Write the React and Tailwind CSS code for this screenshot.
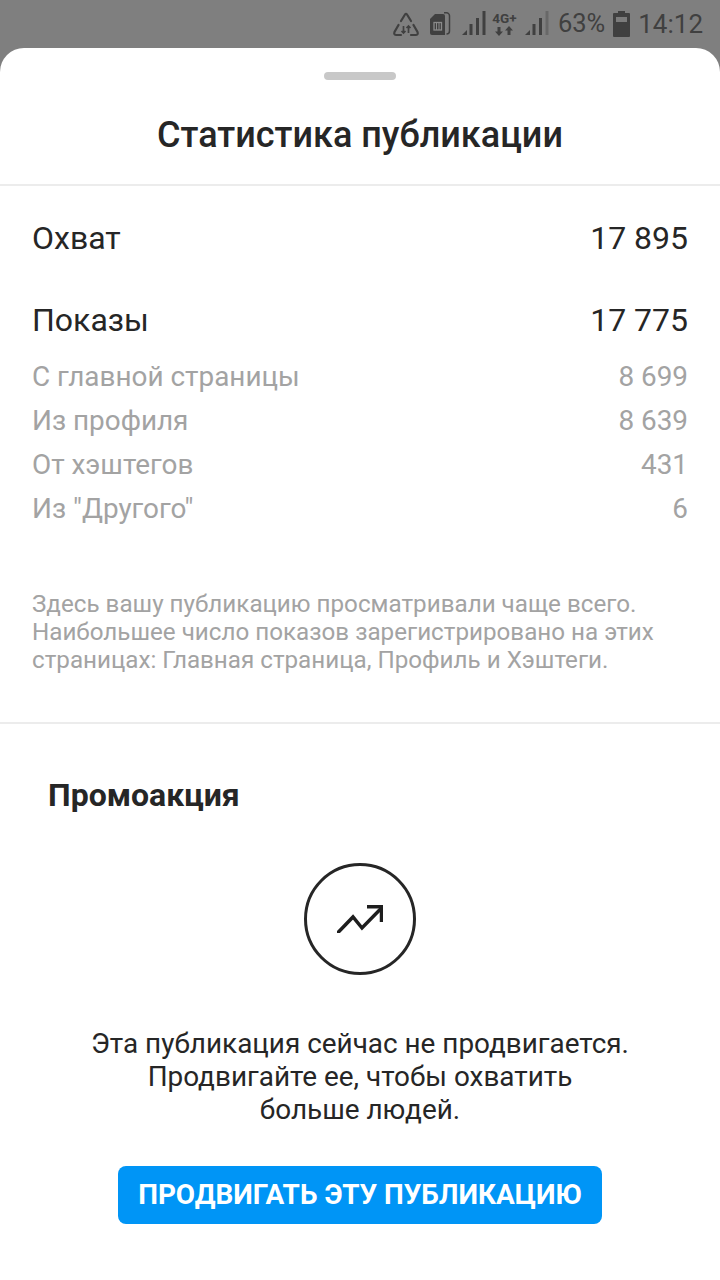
import React from "react";

const impressions = [
  ["С главной страницы", "8 699"],
  ["Из профиля", "8 639"],
  ["От хэштегов", "431"],
  ['Из "Другого"', "6"],
];

function SignalBars({ faded, className }) {
  return (
    <svg width="24" height="26" viewBox="0 0 24 26" className={className} fill="currentColor">
      <path d="M0 24l5-5v5z" />
      <rect x="7.5" y="13" width="3" height="11" />
      <rect x="14" y="7" width="3" height="17" />
      <rect x="20.5" y="0" width="3" height="24" opacity={faded ? 0.35 : 1} />
    </svg>
  );
}

function StatusBar() {
  return (
    <div className="h-12 flex items-center justify-end pr-[17px] text-[#404040]">
      {/* data saver */}
      <svg width="26" height="26" viewBox="0 0 26 26" fill="none" stroke="currentColor" strokeWidth="2.2" strokeLinecap="round" className="mr-[10px]">
        <path d="M8 10 L12 3.5 Q13 2 14 3.5 L18 10" />
        <path d="M5.5 14 L1.5 21 Q0.5 24 3.5 24 H8" />
        <path d="M20.5 14 L24.5 21 Q25.5 24 22.5 24 H18" />
        <path d="M10.5 15v7M8.5 20l2 2 2-2M15.5 22v-7M13.5 17l2-2 2 2" strokeWidth="1.7" strokeLinecap="butt" />
      </svg>
      {/* SIM */}
      <svg width="22" height="24" viewBox="0 0 22 24" className="mr-[11px]">
        <path d="M1 7 L6 2 H14 a2 2 0 0 1 2 2 V23 H3 a2 2 0 0 1 -2 -2z" fill="currentColor" />
        <path d="M15 0.8 H17.5 a3 3 0 0 1 3 3 V19 a3 3 0 0 1 -3 3" fill="none" stroke="currentColor" strokeWidth="1.5" />
        <rect x="5" y="10.5" width="7.5" height="7.5" fill="none" stroke="#8a8a8a" strokeWidth="1.3" />
        <path d="M7.5 10.5v7.5M10 10.5v7.5" stroke="#8a8a8a" strokeWidth="1" />
      </svg>
      <SignalBars className="mr-[6px]" />
      <div className="w-[25px] mr-[8px] flex flex-col items-center font-['Roboto',sans-serif] font-bold text-[13.5px] leading-[13px]">
        <span>4G+</span>
        <svg width="18" height="10" viewBox="0 0 18 10" fill="currentColor" className="mt-[1px]">
          <path d="M4 10L0 5.5h2.5V1h3v4.5H8zM14 0l4 4.5h-2.5V9h-3V4.5H10z" />
        </svg>
      </div>
      <SignalBars faded className="mr-[9px]" />
      <span className="font-['Roboto',sans-serif] text-[25.5px] leading-none mr-[8px]">63%</span>
      {/* battery */}
      <svg width="17" height="26" viewBox="0 0 17 26" className="mr-[8px]" fill="currentColor">
        <rect x="5" y="0" width="7" height="3" />
        <rect x="0" y="2" width="17" height="24" rx="1" />
        <rect x="3" y="6" width="11" height="5" fill="#7c7c7c" />
      </svg>
      <span className="font-['Roboto',sans-serif] text-[26px] leading-none">14:12</span>
    </div>
  );
}

export default function App() {
  return (
    <div className="w-[720px] h-[1280px] bg-[#7f7f7f] font-['Roboto',sans-serif] overflow-hidden">
      <StatusBar />
      <div className="h-[1232px] bg-white rounded-t-[24px]">
        <div className="flex justify-center pt-[24px]">
          <div className="w-[72px] h-[8px] rounded-full bg-[#c8c8c8]" />
        </div>
        <h1 className="mt-[35px] h-[69px] text-center text-[36px] leading-[40px] font-medium text-[#262626]">
          Статистика публикации
        </h1>
        <div className="h-[2px] bg-[#ececec]" />

        <div className="px-[32px] pt-[32px]">
          <div className="flex justify-between text-[32px] leading-[40px] text-[#262626]">
            <span>Охват</span>
            <span>17 895</span>
          </div>
          <div className="mt-[42px] flex justify-between text-[32px] leading-[40px] text-[#262626]">
            <span>Показы</span>
            <span>17 775</span>
          </div>
          <div className="mt-[15px] flex flex-col text-[27.9px] leading-[44px] text-[#a3a3a3]">
            {impressions.map(([label, value]) => (
              <div key={label} className="flex justify-between">
                <span>{label}</span>
                <span>{value}</span>
              </div>
            ))}
          </div>
          <p className="mt-[59px] text-[24.2px] leading-[28px] text-[#a3a3a3]">
            Здесь вашу публикацию просматривали чаще всего.
            <br />
            Наибольшее число показов зарегистрировано на этих
            <br />
            страницах: Главная страница, Профиль и Хэштеги.
          </p>
        </div>

        <div className="mt-[48px] h-[2px] bg-[#ececec]" />

        <h2 className="mt-[51px] pl-[48px] text-[32px] leading-[40px] font-bold text-[#262626]">Промоакция</h2>

        <div className="mt-[48px] flex justify-center">
          <div className="w-[112px] h-[112px] rounded-full border-[3px] border-[#262626] flex items-center justify-center">
            <svg width="46" height="28" viewBox="0 0 46 28" fill="none" stroke="#1e1e1e" strokeWidth="3.5" strokeLinecap="round">
              <path d="M1.5 27 L16 12 L25 23 L44.5 3" />
              <path d="M30 1.7 H44.5 V17" strokeLinecap="butt" />
            </svg>
          </div>
        </div>

        <p className="mt-[52px] text-center text-[27.9px] leading-[33px] text-[#262626]">
          Эта публикация сейчас не продвигается.
          <br />
          Продвигайте ее, чтобы охватить
          <br />
          больше людей.
        </p>

        <div className="mt-[40px] flex justify-center">
          <button className="w-[484px] h-[58px] rounded-[8px] bg-[#0095f6] text-white text-[27.9px] font-bold leading-none">
            ПРОДВИГАТЬ ЭТУ ПУБЛИКАЦИЮ
          </button>
        </div>
      </div>
    </div>
  );
}
